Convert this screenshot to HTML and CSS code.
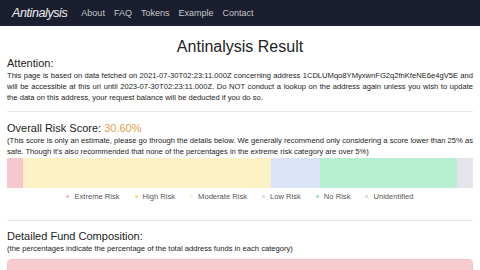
FILE: index.html
```html
<!DOCTYPE html>
<html lang="en">
<head>
  <meta charset="UTF-8" />
  <title>Antinalysis Result</title>
  <link rel="stylesheet" href="styles.css">
</head>
<body>
  <nav class="navbar">
    <a class="brand" href="#">Antinalysis</a>
    <a class="nav-link" href="#">About</a>
    <a class="nav-link" href="#">FAQ</a>
    <a class="nav-link" href="#">Tokens</a>
    <a class="nav-link" href="#">Example</a>
    <a class="nav-link" href="#">Contact</a>
  </nav>

  <main class="container">
    <h1 class="title">Antinalysis Result</h1>

    <h5 class="heading heading-attention">Attention:</h5>
    <p class="note">This page is based on data fetched on 2021-07-30T02:23:11.000Z concerning address 1CDLUMqo8YMyxwnFG2q2fnKfeNE6e4gV5E and will be accessible at this url until 2023-07-30T02:23:11.000Z. Do NOT conduct a lookup on the address again unless you wish to update the data on this address, your request balance will be deducted if you do so.</p>

    <hr class="divider">

    <h5 class="heading heading-score">Overall Risk Score: <span class="score">30.60%</span></h5>
    <p class="note">(This score is only an estimate, please go through the details below. We generally recommend only considering a score lower than 25% as safe. Though it's also recommended that none of the percentages in the extreme risk category are over 5%)</p>

    <div class="risk-bar">
      <div class="seg seg-extreme" style="width: 3.4%"></div>
      <div class="seg seg-high" style="width: 53.2%"></div>
      <div class="seg seg-low" style="width: 10.5%"></div>
      <div class="seg seg-none" style="width: 29.5%"></div>
      <div class="seg seg-unknown" style="width: 3.4%"></div>
    </div>

    <ul class="legend">
      <li><span class="dot dot-extreme"></span>Extreme Risk</li>
      <li><span class="dot dot-high"></span>High Risk</li>
      <li><span class="dot dot-moderate"></span>Moderate Risk</li>
      <li><span class="dot dot-low"></span>Low Risk</li>
      <li><span class="dot dot-none"></span>No Risk</li>
      <li><span class="dot dot-unknown"></span>Unidentified</li>
    </ul>

    <hr class="divider divider-low">

    <h5 class="heading heading-funds">Detailed Fund Composition:</h5>
    <p class="note">(the percentages indicate the percentage of the total address funds in each category)</p>

    <div class="alert-danger"></div>
  </main>
</body>
</html>
```

FILE: styles.css
```css
body {
  margin: 0;
  font-family: "Liberation Sans", Arial, sans-serif;
  color: #222;
  background: #fff;
  overflow: hidden;
}
.navbar {
  height: 26px;
  background: #1b1e2e;
  display: flex;
  align-items: center;
  padding: 0 12px;
  gap: 9px;
}
.brand {
  color: #eee;
  font-style: italic;
  font-size: 12.5px;
  letter-spacing: -0.4px;
  text-decoration: none;
  margin-right: 5px;
}
.nav-link {
  color: #c4c6cc;
  font-size: 9px;
  text-decoration: none;
}
.container {
  padding: 0 7px;
}
.title {
  font-size: 16px;
  font-weight: normal;
  text-align: center;
  margin: 11px 0 0;
  line-height: 19px;
}
.heading {
  font-size: 11px;
  font-weight: normal;
  margin: 0;
  line-height: 12px;
}
.heading-attention {
  margin-top: 1px;
}
.heading-score {
  margin-top: 10px;
}
.heading-funds {
  margin-top: 9px;
}
.score {
  color: #e2a04d;
}
.note {
  font-size: 7.6px;
  line-height: 10.8px;
  margin: 2px 0 0;
  text-align: justify;
}
.divider {
  border: none;
  border-top: 1px solid #e8e8e8;
  margin: 8px 0 0;
}
.divider-low {
  margin-top: 18px;
}
.risk-bar {
  display: flex;
  height: 30px;
  margin-top: 0;
}
.seg-extreme { background: #f4c8cc; }
.seg-high { background: #fdf1c6; }
.seg-low { background: #dbe4f7; }
.seg-none { background: #b6efd1; }
.seg-unknown { background: #e4e4ea; }
.legend {
  list-style: none;
  margin: 4px 0 0;
  padding: 0;
  display: flex;
  justify-content: center;
  gap: 15px;
  font-size: 7.6px;
  color: #555;
  line-height: 10px;
}
.legend li {
  display: flex;
  align-items: center;
}
.dot {
  width: 3px;
  height: 3px;
  border-radius: 50%;
  margin-right: 5px;
}
.dot-extreme { background: #f0b0b8; }
.dot-high { background: #f6d676; }
.dot-moderate { background: #fbeec8; }
.dot-low { background: #d4dcee; }
.dot-none { background: #8fe4bb; }
.dot-unknown { background: #d8d8de; }
.alert-danger {
  margin-top: 4px;
  height: 40px;
  background: #f5cdcf;
  border: 1px solid #f3c2c5;
  border-radius: 4px;
}
```
